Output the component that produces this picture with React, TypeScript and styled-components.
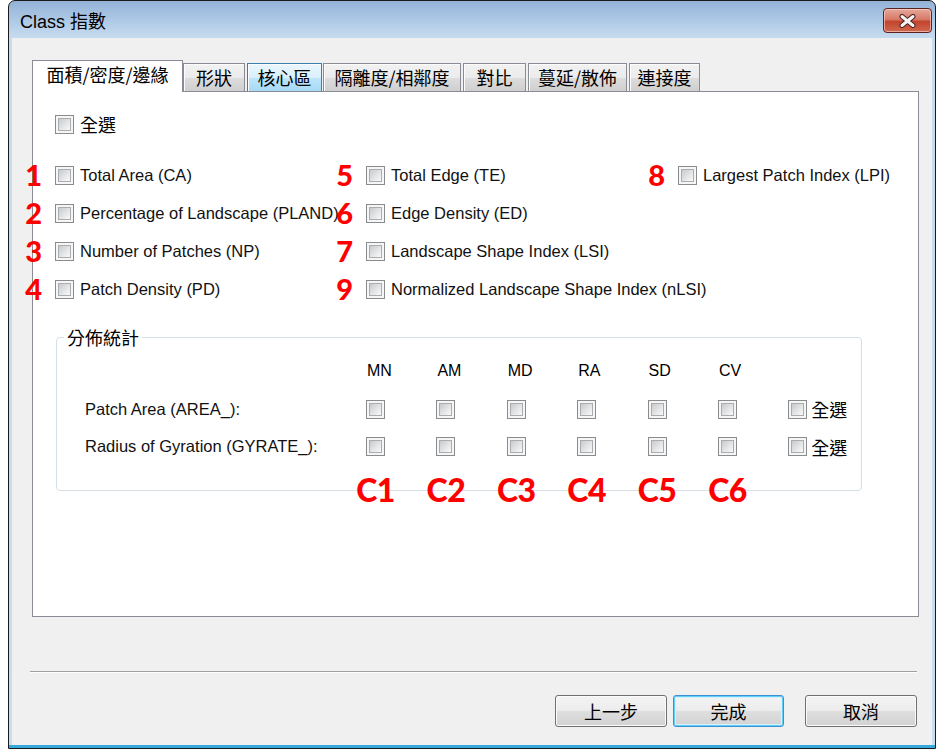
import styled, { createGlobalStyle } from "styled-components";

const GlobalStyle = createGlobalStyle`
  html, body {
    margin: 0;
    padding: 0;
    background: #fff;
  }
  body {
    font-family: "Liberation Sans", "Noto Sans CJK TC", sans-serif;
    font-size: 16px;
    color: #000;
  }
  * {
    box-sizing: border-box;
  }
`;

const Window = styled.div`
  margin-left: 8px;
  width: 928px;
  height: 749px;
  border: 1px solid #1a1a1a;
  border-radius: 7px 7px 0 0;
  background: linear-gradient(
    #93b3d7 0,
    #b7d0ea 26px,
    #c7dbef 37px,
    #c9ddf0 calc(100% - 3px),
    #35a9dc calc(100% - 3px)
  );
  display: flex;
  flex-direction: column;
  overflow: hidden;
`;

const TitleBar = styled.div`
  height: 37px;
  flex: none;
  display: flex;
  align-items: flex-start;
  justify-content: space-between;
  padding: 0 3px 0 11px;
`;

const Title = styled.span`
  margin-top: 11px;
  font-size: 18px;
  line-height: 20px;
  color: #000;
`;

const CloseButton = styled.div`
  margin-top: 7px;
  width: 49px;
  height: 25px;
  border: 1px solid #5b2222;
  border-radius: 4px;
  background: linear-gradient(#e6a89a 0%, #d77a66 45%, #c2432c 55%, #cf6a4f 100%);
  box-shadow: inset 0 0 0 1px rgba(255, 220, 210, 0.6);
  display: flex;
  align-items: center;
  justify-content: center;
`;

const Client = styled.div`
  flex: 1;
  margin: 0 3px 3px;
  background: #f0f0f0;
  padding: 22px 13px 0 20px;
  display: flex;
  flex-direction: column;
`;

const TabStrip = styled.div`
  height: 31px;
  flex: none;
  display: flex;
  align-items: flex-end;
  position: relative;
  z-index: 1;
`;

const Tab = styled.div<{ $w: number; $active?: boolean; $hover?: boolean; $gap?: number }>`
  width: ${(p) => p.$w}px;
  margin-left: ${(p) => p.$gap ?? 0}px;
  height: ${(p) => (p.$active ? 32 : 28)}px;
  margin-bottom: ${(p) => (p.$active ? -1 : 0)}px;
  border: 1px solid ${(p) => (p.$hover ? "#3c7fb1" : "#898c95")};
  border-bottom: none;
  background: ${(p) =>
    p.$active
      ? "#fff"
      : p.$hover
      ? "linear-gradient(#eaf6fd 0%, #d9f0fc 50%, #bee6fd 51%, #a7d9f5 100%)"
      : "linear-gradient(#f2f2f2 0%, #ebebeb 50%, #dddddd 51%, #cfcfcf 100%)"};
  box-shadow: ${(p) => (p.$active ? "none" : "inset 1px 1px 0 #fcfcfc")};
  font-family: "Noto Sans CJK TC", "Liberation Sans", sans-serif;
  font-size: 18px;
  line-height: 26px;
  text-align: center;
  white-space: nowrap;
  color: #000;
`;

const Panel = styled.div`
  height: 526px;
  flex: none;
  background: #fff;
  border: 1px solid #898c95;
  padding: 22px 0 0 22px;
  display: flex;
  flex-direction: column;
  align-items: flex-start;
`;

const Box = styled.span`
  flex: none;
  width: 19px;
  height: 19px;
  border: 1px solid #8a8b8c;
  background: #f6f6f6;
  padding: 2px;
  display: inline-flex;
  &::after {
    content: "";
    flex: 1;
    border: 1px solid #a9acb0;
    background: linear-gradient(135deg, #c9cacc 0%, #e4e5e6 55%, #f9f9f9 100%);
  }
`;

const CheckLine = styled.label<{ $gap?: number }>`
  display: flex;
  align-items: center;
  gap: ${(p) => p.$gap ?? 6}px;
  white-space: nowrap;
  position: relative;
`;

const CjkText = styled.span`
  font-family: "Noto Sans CJK TC", sans-serif;
  font-size: 18px;
  line-height: 20px;
`;

const MetricGrid = styled.div`
  margin-top: 32px;
  display: grid;
  grid-template-columns: 311px 312px auto;
  grid-template-rows: repeat(4, 19px);
  grid-auto-flow: column;
  row-gap: 19px;
`;

const Label = styled.span`
  font-size: 16.5px;
  line-height: 19px;
  color: #111;
`;

const Annot = styled.span`
  position: absolute;
  right: calc(100% + 13px);
  top: 50%;
  transform: translateY(-54%);
  font-family: Lato, "Liberation Sans", sans-serif;
  font-weight: 900;
  font-size: 29px;
  line-height: 1;
  color: #f00;
`;

const GroupBox = styled.fieldset`
  margin: 28px 0 0 1px;
  width: 806px;
  height: 164px;
  padding: 0;
  border: 1px solid #d5dfe5;
  border-radius: 4px;
  min-width: 0;
`;

const GroupTitle = styled.legend`
  margin-left: 7px;
  padding: 0 3px;
  font-family: "Noto Sans CJK TC", sans-serif;
  font-size: 18px;
  line-height: 20px;
  color: #000;
`;

const StatGrid = styled.div`
  padding: 14px 0 0 28px;
  display: grid;
  grid-template-columns: 281px repeat(6, 70.4px) auto;
  grid-template-rows: 20px 19px 19px 30px;
  row-gap: 18.5px;
  align-items: center;
`;

const ColHead = styled.span`
  padding-left: 1px;
  font-size: 16px;
  line-height: 20px;
`;

const CTag = styled.span`
  width: 19px;
  display: flex;
  justify-content: center;
  font-family: Lato, "Liberation Sans", sans-serif;
  font-weight: 900;
  font-size: 32px;
  line-height: 30px;
  letter-spacing: -0.5px;
  color: #f00;
  white-space: nowrap;
`;

const Separator = styled.div`
  margin: 54px 2px 0 -2px;
  height: 2px;
  border-top: 1px solid #a0a0a0;
  border-bottom: 1px solid #fff;
`;

const ButtonRow = styled.div`
  margin-top: 22px;
  padding-right: 2px;
  display: flex;
  justify-content: flex-end;
`;

const Button = styled.button<{ $w: number; $gap: number; $default?: boolean }>`
  width: ${(p) => p.$w}px;
  margin-left: ${(p) => p.$gap}px;
  height: 32px;
  border: 1px solid ${(p) => (p.$default ? "#3c8fd0" : "#707070")};
  border-radius: 3px;
  background: linear-gradient(#f4f4f4 0%, #ececec 48%, #dedede 52%, #d2d2d2 100%);
  box-shadow: ${(p) =>
    p.$default ? "inset 0 0 0 1px #5fd0f7, inset 0 0 0 2px #d6f1fc" : "inset 0 0 0 1px #fbfbfb"};
  font-family: "Noto Sans CJK TC", sans-serif;
  font-size: 18px;
  line-height: 20px;
  color: #000;
  padding: 0;
`;

type Metric = { n: string; text: string };

const metrics: Metric[] = [
  { n: "1", text: "Total Area (CA)" },
  { n: "2", text: "Percentage of Landscape (PLAND)" },
  { n: "3", text: "Number of Patches (NP)" },
  { n: "4", text: "Patch Density (PD)" },
  { n: "5", text: "Total Edge (TE)" },
  { n: "6", text: "Edge Density (ED)" },
  { n: "7", text: "Landscape Shape Index (LSI)" },
  { n: "9", text: "Normalized Landscape Shape Index (nLSI)" },
  { n: "8", text: "Largest Patch Index (LPI)" },
];

const tabs = [
  { t: "面積/密度/邊緣", w: 151, gap: 0, active: true },
  { t: "形狀", w: 62, gap: 0 },
  { t: "核心區", w: 75, gap: 2, hover: true },
  { t: "隔離度/相鄰度", w: 138, gap: 1 },
  { t: "對比", w: 63, gap: 2 },
  { t: "蔓延/散佈", w: 99, gap: 2 },
  { t: "連接度", w: 71, gap: 2 },
];

const stats = ["MN", "AM", "MD", "RA", "SD", "CV"];
const statRows = ["Patch Area (AREA_):", "Radius of Gyration (GYRATE_):"];

const CloseIcon = () => (
  <svg width="17" height="14" viewBox="0 0 17 14">
    <path d="M3 2.5 L14 11.5 M14 2.5 L3 11.5" stroke="#4a2020" strokeWidth="5" strokeLinecap="round" fill="none" />
    <path d="M3 2.5 L14 11.5 M14 2.5 L3 11.5" stroke="#f4f4f4" strokeWidth="3" strokeLinecap="round" fill="none" />
  </svg>
);

export default function App() {
  return (
    <>
      <GlobalStyle />
      <Window>
        <TitleBar>
          <Title>Class 指數</Title>
          <CloseButton>
            <CloseIcon />
          </CloseButton>
        </TitleBar>
        <Client>
          <TabStrip>
            {tabs.map((tab) => (
              <Tab key={tab.t} $w={tab.w} $gap={tab.gap} $active={tab.active} $hover={tab.hover}>
                {tab.t}
              </Tab>
            ))}
          </TabStrip>
          <Panel>
            <CheckLine>
              <Box />
              <CjkText>全選</CjkText>
            </CheckLine>
            <MetricGrid>
              {metrics.map((m) => (
                <CheckLine key={m.text} $gap={6}>
                  <Annot>{m.n}</Annot>
                  <Box />
                  <Label>{m.text}</Label>
                </CheckLine>
              ))}
            </MetricGrid>
            <GroupBox>
              <GroupTitle>分佈統計</GroupTitle>
              <StatGrid>
                <span />
                {stats.map((s) => (
                  <ColHead key={s}>{s}</ColHead>
                ))}
                <span />
                {statRows.map((r) => (
                  <>
                    <Label key={r}>{r}</Label>
                    {stats.map((s) => (
                      <Box key={r + s} />
                    ))}
                    <CheckLine $gap={4}>
                      <Box />
                      <CjkText>全選</CjkText>
                    </CheckLine>
                  </>
                ))}
                <span />
                {stats.map((s, i) => (
                  <CTag key={"c" + s}>C{i + 1}</CTag>
                ))}
                <span />
              </StatGrid>
            </GroupBox>
          </Panel>
          <Separator />
          <ButtonRow>
            <Button $w={112} $gap={0}>上一步</Button>
            <Button $w={111} $gap={6} $default>
              完成
            </Button>
            <Button $w={112} $gap={21}>取消</Button>
          </ButtonRow>
        </Client>
      </Window>
    </>
  );
}
